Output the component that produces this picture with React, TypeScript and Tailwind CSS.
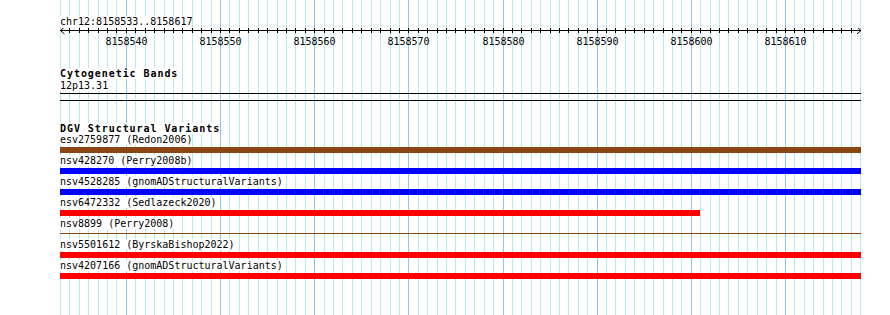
import React from "react";

const START = 8158533;
const END = 8158617;
const BP = 9.415;
const LEFT = 60;
const SPAN = END - START + 1;
const WIDTH = 801;

interface Variant {
  label: string;
  color: string;
  start: number;
  end: number;
  thin?: boolean;
}

const variants: Variant[] = [
  { label: "esv2759877 (Redon2006)", color: "#8b4513", start: START, end: END + 1 },
  { label: "nsv428270 (Perry2008b)", color: "#0000ff", start: START, end: END + 1 },
  { label: "nsv4528285 (gnomADStructuralVariants)", color: "#0000ff", start: START, end: END + 1 },
  { label: "nsv6472332 (Sedlazeck2020)", color: "#ff0000", start: START, end: 8158601 },
  { label: "nsv8899 (Perry2008)", color: "#8b4513", start: START, end: END + 1, thin: true },
  { label: "nsv5501612 (ByrskaBishop2022)", color: "#ff0000", start: START, end: END + 1 },
  { label: "nsv4207166 (gnomADStructuralVariants)", color: "#ff0000", start: START, end: END + 1 },
];

const barWidth = (v: Variant) =>
  v.end > END ? WIDTH : Math.round((v.end - v.start) * BP);

const GridLines: React.FC = () => {
  const lines = [];
  for (let k = 0; k <= SPAN; k++) {
    const x = Math.round(LEFT + k * BP) + 0.5;
    const major = (START + k) % 10 === 0;
    lines.push(
      <line
        key={k}
        x1={x}
        x2={x}
        y1={0}
        y2={315}
        stroke={major ? "#8cc6ea" : "#b0ebf0"}
        strokeWidth={1}
      />
    );
  }
  return (
    <svg className="absolute inset-0" width={890} height={315}>
      {lines}
    </svg>
  );
};

const Ruler: React.FC = () => {
  const ticks = [];
  const labels = [];
  for (let k = 1; k < SPAN; k++) {
    const x = Math.round(k * BP) + 0.5;
    ticks.push(<line key={k} x1={x} x2={x} y1={0} y2={5} stroke="#000" />);
    if ((START + k) % 10 === 0) {
      labels.push(
        <text key={k} x={x} y={16.5} textAnchor="middle">
          {START + k}
        </text>
      );
    }
  }
  return (
    <svg
      width={WIDTH + 1}
      height={20}
      className="block"
      fontFamily="'DejaVu Sans Mono', monospace"
      fontSize={10}
    >
      <line x1={0} x2={WIDTH} y1={2.5} y2={2.5} stroke="#000" />
      <path d="M4.5 -1 L0.5 2.5 L4.5 6" fill="none" stroke="#000" />
      <path d={`M${WIDTH - 4} -1 L${WIDTH} 2.5 L${WIDTH - 4} 6`} fill="none" stroke="#000" />
      {ticks}
      {labels}
    </svg>
  );
};

const Title: React.FC<{ text: string; className?: string }> = ({ text, className }) => (
  <div className={className}>
    <span className="bg-white font-bold tracking-[0.94px]">{text}</span>
  </div>
);

export default function App() {
  return (
    <div className="relative w-[890px] h-[315px] overflow-hidden bg-white text-black font-['DejaVu_Sans_Mono',monospace] text-[10px] leading-[12px]">
      <GridLines />
      <div className="relative w-[861px] pl-[60px] pt-[16px]">
        <div>
          <span className="bg-white">chr12:8158533..8158617</span>
        </div>
        <Ruler />

        <Title text="Cytogenetic Bands" className="mt-[20px]" />
        <div>
          <span className="bg-white">12p13.31</span>
        </div>
        <div className="mt-[1px] h-[8px] w-[801px] border-y border-black" />

        <Title text="DGV Structural Variants" className="mt-[22px] leading-[11px]" />
        <div className="flex flex-col">
          {variants.map((v) => (
            <div key={v.label} className="flex flex-col pb-[2px]">
              <div>
                <span className="bg-white">{v.label}</span>
              </div>
              <div className="mt-[1px] h-[6px]">
                {v.thin ? (
                  <div
                    className="mt-[2px] h-px"
                    style={{ width: barWidth(v), backgroundColor: v.color }}
                  />
                ) : (
                  <div
                    className="h-[6px]"
                    style={{ width: barWidth(v), backgroundColor: v.color }}
                  />
                )}
              </div>
            </div>
          ))}
        </div>
      </div>
    </div>
  );
}
